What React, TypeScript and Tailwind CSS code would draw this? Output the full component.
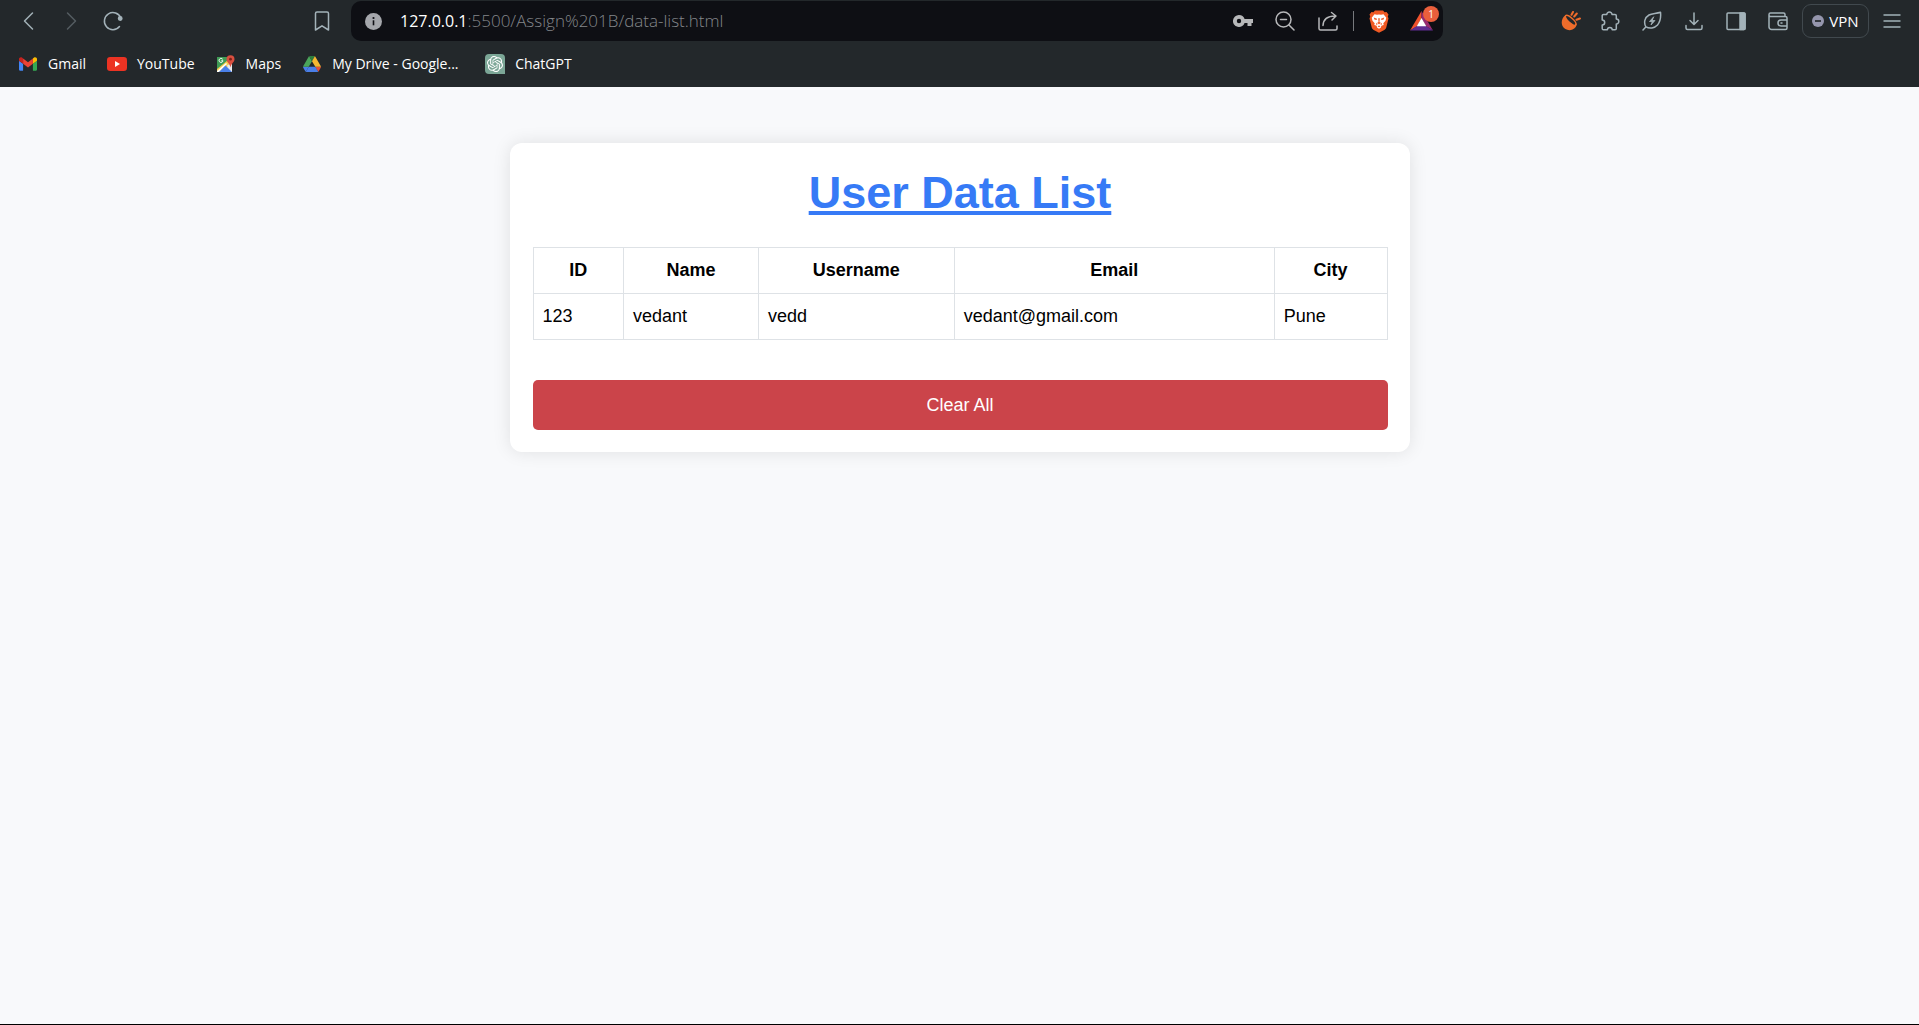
import type { ReactNode } from "react";
import { SiOpenai } from "react-icons/si";

const stroke = {
  fill: "none",
  stroke: "currentColor",
  strokeWidth: 1.5,
  strokeLinecap: "round" as const,
  strokeLinejoin: "round" as const,
};

function Icon({ children, size = 20 }: { children: ReactNode; size?: number }) {
  return (
    <svg width={size} height={size} viewBox="0 0 20 20" aria-hidden="true" {...stroke}>
      {children}
    </svg>
  );
}

function ToolButton({ label, children, className = "w-[42px] text-[#a3b2b9]" }: { label: string; children: ReactNode; className?: string }) {
  return (
    <button type="button" aria-label={label} className={`flex h-10 shrink-0 items-center justify-center ${className}`}>
      {children}
    </button>
  );
}

function Gmail() {
  return (
    <svg width="18" height="14" viewBox="52 42 88 66" aria-hidden="true">
      <path fill="#4285f4" d="M58 108h14V74L52 59v43c0 3.32 2.69 6 6 6" />
      <path fill="#34a853" d="M120 108h14c3.32 0 6-2.69 6-6V59l-20 15" />
      <path fill="#fbbc04" d="M120 48v26l20-15v-8c0-7.42-8.47-11.65-14.4-7.2" />
      <path fill="#ea4335" d="M72 74V48l24 18 24-18v26L96 92" />
      <path fill="#c5221f" d="M52 51v8l20 15V48l-5.6-4.2c-5.94-4.45-14.4-.22-14.4 7.2" />
    </svg>
  );
}

function YouTube() {
  return (
    <svg width="20" height="14" viewBox="0 0 20 14" aria-hidden="true">
      <rect width="20" height="14" rx="3.2" fill="#ec3323" />
      <path d="M8 4v6l5-3z" fill="#fff" />
    </svg>
  );
}

function Maps() {
  return (
    <svg width="20" height="20" viewBox="0 0 20 20" aria-hidden="true">
      <path d="M1 3h15v15H1z" fill="#e8eaed" />
      <path d="M1 3h14v5L1 18z" fill="#3f9b55" />
      <path d="M1 15 12 6l3 3-9 9H1z" fill="#f7cb4d" />
      <path d="m1 17 9-8 1 1-8 8H1z" fill="#fff" />
      <path d="M3 18 9.500 11.500 16 18z" fill="#4a80e8" />
      <path d="M11 11.500 16 9v8.500z" fill="#e8eaed" />
      <path d="M6.700 5.300a2 2 0 1 0 .3 1.500H5.300" fill="none" stroke="#fff" strokeWidth="1" />
      <path d="M14.500 1.200a4 4 0 0 1 4 4c0 3-3.200 3.700-4 8.300-.8-4.600-4-5.300-4-8.300a4 4 0 0 1 4-4z" fill="#d94f3f" />
      <circle cx="14.500" cy="5.200" r="1.400" fill="#7c2018" />
    </svg>
  );
}

function Drive() {
  return (
    <svg width="18" height="16" viewBox="0 0 87.3 78" aria-hidden="true">
      <path fill="#4a7fe8" d="m6.6 66.85 3.85 6.65c.8 1.4 1.95 2.5 3.3 3.3l13.75-23.8h-27.5c0 1.55.4 3.1 1.2 4.5z" />
      <path fill="#4aa45a" d="m43.65 25-13.75-23.8c-1.35.8-2.5 1.9-3.3 3.3l-25.4 44a9.06 9.06 0 0 0 -1.2 4.5h27.5z" />
      <path fill="#e2503a" d="m73.55 76.8c1.35-.8 2.5-1.9 3.3-3.3l1.6-2.75 7.65-13.25c.8-1.4 1.2-2.95 1.2-4.5h-27.502l5.852 11.5z" />
      <path fill="#2d7d3c" d="m43.65 25 13.75-23.8c-1.35-.8-2.9-1.2-4.5-1.2h-18.5c-1.6 0-3.15.45-4.5 1.2z" />
      <path fill="#4a7fe8" d="m59.8 53h-32.3l-13.75 23.8c1.35.8 2.9 1.2 4.5 1.2h50.8c1.6 0 3.15-.45 4.5-1.2z" />
      <path fill="#f5b731" d="m73.4 26.5-12.7-22c-.8-1.4-1.95-2.5-3.3-3.3l-13.75 23.8 16.15 28h27.45c0-1.55-.4-3.1-1.2-4.5z" />
    </svg>
  );
}

function ChatGpt() {
  return (
    <span className="flex size-5 items-center justify-center rounded-t-sm rounded-bl-sm bg-[#7ba696] text-white">
      <SiOpenai size={16} />
    </span>
  );
}

function BraveLion() {
  return (
    <svg width="20" height="23" viewBox="0 0 20 23" aria-hidden="true">
      <path d="M6 .5h8l1.600 1.700 1.900-.2 2 2.500-.7 2 .7 2-2.300 9.200c-.3 1-1 1.800-1.900 2.400L10 22.700l-5.300-2.600c-.9-.6-1.600-1.400-1.900-2.400L.5 8.500l.7-2-.7-2 2-2.500 1.900.2z" fill="#f15a24" />
      <path d="M5.500 4.300 8 4.800 10 4.400l2 .4 2.500-.5 2.800 3.500-.8 3-2.200 2.400.4 1.800-2.400.8-.3 1.700L10 18.700l-2-1.200-.3-1.700-2.400-.8.400-1.800-2.200-2.400-.8-3z" fill="#fff" />
      <path d="m4.800 7.500 3.200 1.200-.4 1.300-2.200-.6zM15.200 7.500 12 8.700l.4 1.300 2.200-.6zM9.200 8.300h1.600l-.3 3.700 1.500 1-2 1.300-2-1.300 1.500-1zM7 12.800l1.700 1.600-1.500.4zM13 12.800l-1.700 1.600 1.500.4zM8.600 16.300l1.400-.8 1.400.8-1.400 1z" fill="#f15a24" />
    </svg>
  );
}

function Rewards() {
  return (
    <span className="relative flex h-10 w-full items-center justify-center">
      <svg width="23" height="20" viewBox="0 0 23 20" aria-hidden="true">
        <path d="M11.500 0 0 19.500l7-4.300 4.500-8z" fill="#f0522d" />
        <path d="M11.500 0 23 19.500l-7-4.300-4.500-8z" fill="#962b70" />
        <path d="M0 19.500h23l-7-4.500H7z" fill="#5f2d91" />
        <path d="M11.500 7 16.300 15.300H6.700z" fill="#fff" />
      </svg>
      <span className="absolute right-1 top-[5px] flex size-4 items-center justify-center rounded-full bg-[#ea5f3c] text-[10px] leading-none text-white">
        1
      </span>
    </span>
  );
}

const bookmarks = [
  { name: "Gmail", icon: <Gmail />, labelWidth: "" },
  { name: "YouTube", icon: <YouTube />, labelWidth: "" },
  { name: "Maps", icon: <Maps />, labelWidth: "" },
  { name: "My Drive - Google...", icon: <Drive />, labelWidth: "min-w-[132px]" },
  { name: "ChatGPT", icon: <ChatGpt />, labelWidth: "" },
];

function AddressBar() {
  return (
    <div className="flex h-10 min-w-0 flex-1 items-center rounded-[10px] bg-[#0e0f14] text-[#b7b8ba]">
      <button type="button" aria-label="Site information" className="ml-[14px] shrink-0">
        <svg width="17" height="17" viewBox="0 0 17 17" aria-hidden="true">
          <circle cx="8.500" cy="8.500" r="8.500" fill="#a5a7ac" />
          <circle cx="8.500" cy="5" r="1.100" fill="#0e0f14" />
          <path d="M7.700 7.300h1.600v5H7.700z" fill="#0e0f14" />
        </svg>
      </button>
      <label htmlFor="address" className="ml-[18px] shrink-0 text-base text-white">
        127.0.0.1
      </label>
      <input
        id="address"
        type="text"
        defaultValue=":5500/Assign%201B/data-list.html"
        className="min-w-0 flex-1 bg-transparent text-[17px] font-light text-[#83868a] outline-none"
      />
      <ToolButton label="Saved passwords" className="w-[43px]">
        <svg width="20" height="12" viewBox="0 0 20 12" aria-hidden="true">
          <path fillRule="evenodd" fill="currentColor" d="M6 0a6 6 0 0 1 5.600 4H20v4h-1.500v3h-4V8h-2.900A6 6 0 1 1 6 0zm0 3.800a2.200 2.200 0 1 0 0 4.400 2.200 2.200 0 0 0 0-4.400z" />
        </svg>
      </ToolButton>
      <ToolButton label="Zoom" className="w-[42px]">
        <Icon>
          <circle cx="8.500" cy="8.500" r="7.500" />
          <path d="M14 14l5 5M5.500 8.500h6" />
        </Icon>
      </ToolButton>
      <ToolButton label="Share" className="w-[43px]">
        <Icon>
          <path d="M1 7v10.500A1.500 1.500 0 0 0 2.500 19h15a1.500 1.500 0 0 0 1.500-1.500V15" />
          <path d="M5 14.500c.3-5.500 4-9.500 12-9.500M13.500 1.500 18 5l-4 4" />
        </Icon>
      </ToolButton>
      <span className="mx-1 h-5 w-px shrink-0 bg-[#77797d]" />
      <ToolButton label="Brave Shields" className="w-[42px]">
        <BraveLion />
      </ToolButton>
      <ToolButton label="Brave Rewards" className="w-[43px]">
        <Rewards />
      </ToolButton>
    </div>
  );
}

function Browser() {
  return (
    <header className="bg-[#23282b] pt-px font-['Open_Sans',sans-serif]">
      <div className="flex items-center">
        <nav aria-label="Navigation" className="flex w-[351px] shrink-0 items-center px-2">
          <ToolButton label="Back">
            <Icon>
              <path d="M13.500 2 5.500 10l8 8" />
            </Icon>
          </ToolButton>
          <ToolButton label="Forward" className="w-[42px] text-[#555d62]">
            <Icon>
              <path d="M6.500 2l8 8-8 8" />
            </Icon>
          </ToolButton>
          <ToolButton label="Reload">
            <Icon>
              <path d="M16.500 15.500A8.500 8.500 0 1 1 17.800 7" />
              <circle cx="17.200" cy="7.500" r="1.700" fill="currentColor" />
            </Icon>
          </ToolButton>
          <ToolButton label="Bookmark this page" className="ml-auto w-[42px] text-[#a3b2b9]">
            <Icon>
              <path d="M5 1h10a1.500 1.500 0 0 1 1.500 1.500V19L10 14.800 3.500 19V2.500A1.500 1.500 0 0 1 5 1z" />
            </Icon>
          </ToolButton>
        </nav>
        <AddressBar />
        <div className="flex w-[476px] shrink-0 items-center justify-end pr-[6px]">
          <ToolButton label="Extension" className="w-9 text-[#ee6c2b]">
            <svg width="20" height="20" viewBox="0 0 20 20" aria-hidden="true">
              <path d="M4.200 4.500C1 6.500-.2 11.500 1.500 15c1.800 3.800 6.500 5 10 3.500 2.600-1.200 4-3.200 4.300-5.500z" fill="currentColor" />
              <ellipse cx="9.600" cy="9.300" rx="2.400" ry="6.800" transform="rotate(-48 9.600 9.300)" fill="#23282b" stroke="currentColor" strokeWidth="1.500" />
              <path d="M10.500 3.800 12 1M13.200 5.500l2.600-3M15.500 8.800l3.500-1.300" stroke="currentColor" strokeWidth="2" strokeLinecap="round" />
            </svg>
          </ToolButton>
          <ToolButton label="Extensions">
            <Icon>
              <path d="M3.500 3.500h3.300a2.600 2.600 0 1 1 5.200 0h3a1.300 1.300 0 0 1 1.300 1.300V8a2.500 2.500 0 0 1 0 5v4.500a1.300 1.300 0 0 1-1.300 1.300h-2.800a2.400 2.400 0 0 0-4.800 0H3.500a1.300 1.300 0 0 1-1.300-1.300V14a2.500 2.500 0 0 0 0-5V4.800a1.300 1.300 0 0 1 1.300-1.300z" />
            </Icon>
          </ToolButton>
          <ToolButton label="Performance">
            <Icon>
              <path d="M1 19l3-3.200M4 15.800C1.500 12 2.500 6.500 7 4c3-1.700 7-1.300 11.500-2.800C19 6 18.500 10.500 15.500 14c-3 3.300-8 4-11.500 1.800z" />
              <path d="M11.500 6 7.500 10.500h2.800L9 14l4-4.500h-2.500z" fill="currentColor" strokeWidth="0.800" />
            </Icon>
          </ToolButton>
          <ToolButton label="Downloads">
            <Icon>
              <path d="M10 2v11M6 9.500l4 4 4-4M2 14.500V17a1.500 1.500 0 0 0 1.500 1.500h13A1.500 1.500 0 0 0 18 17v-2.500" />
            </Icon>
          </ToolButton>
          <ToolButton label="Sidebar">
            <Icon>
              <rect x="1" y="2" width="18" height="16.500" rx="1" />
              <path d="M14 2h4a1 1 0 0 1 1 1v14.500a1 1 0 0 1-1 1h-4z" fill="currentColor" />
            </Icon>
          </ToolButton>
          <ToolButton label="Wallet">
            <Icon>
              <path d="M17 5.500V3.500A1.500 1.500 0 0 0 15.500 2h-13A1.500 1.500 0 0 0 1 3.500V16a2.500 2.500 0 0 0 2.500 2.500h14A1.500 1.500 0 0 0 19 17V7a1.500 1.500 0 0 0-1.500-1.500h-15A1.500 1.500 0 0 1 1 4M19 9h-6a3 3 0 0 0 0 6h6M13 12h1" />
            </Icon>
          </ToolButton>
          <button
            type="button"
            className="ml-[3px] mr-[2px] flex h-[34px] w-[67px] shrink-0 items-center justify-center gap-[5px] rounded-[9px] border border-[#41494e] text-[15px] text-white"
          >
            <svg width="12" height="12" viewBox="0 0 12 12" aria-hidden="true">
              <circle cx="6" cy="6" r="6" fill="#9596ad" />
              <path d="M3 6h6" stroke="#23282b" strokeWidth="1.700" />
            </svg>
            VPN
          </button>
          <ToolButton label="Menu">
            <Icon>
              <path d="M1.500 4h17M1.500 10h17M1.500 16h17" strokeLinecap="butt" />
            </Icon>
          </ToolButton>
        </div>
      </div>
      <nav aria-label="Bookmarks" className="flex h-[46px] items-center gap-[21px] px-[18px]">
        {bookmarks.map((b) => (
          <a key={b.name} href="#" className="flex items-center gap-[10px] text-sm text-white">
            <span className="flex size-5 items-center justify-center">{b.icon}</span>
            <span className={b.labelWidth}>{b.name}</span>
          </a>
        ))}
      </nav>
    </header>
  );
}

const columns = ["ID", "Name", "Username", "Email", "City"];
const users = [["123", "vedant", "vedd", "vedant@gmail.com", "Pune"]];

export default function App() {
  return (
    <div className="flex min-h-screen flex-col border-b border-black bg-[#f8f9fb]">
      <Browser />
      <main className="px-4 pb-10 pt-14 font-['Liberation_Sans',Arial,sans-serif] text-[18px] leading-[27px] text-black">
        <section className="mx-auto max-w-[900px] rounded-xl bg-white pb-[22px] pl-[23px] pr-[22px] pt-[23px] shadow-[0_0_18px_rgba(0,0,0,0.1)]">
          <h1 className="mb-[27px] text-center text-[45px] font-bold leading-[54px] text-[#367af6] underline">User Data List</h1>
          <table className="w-full border-collapse">
            <thead>
              <tr>
                {columns.map((c) => (
                  <th key={c} scope="col" className="border border-[#dee2e6] p-[9px] text-center font-bold">
                    {c}
                  </th>
                ))}
              </tr>
            </thead>
            <tbody>
              {users.map((u) => (
                <tr key={u[0]}>
                  {u.map((v) => (
                    <td key={v} className="border border-[#dee2e6] p-[9px]">
                      {v}
                    </td>
                  ))}
                </tr>
              ))}
            </tbody>
          </table>
          <button type="button" className="mt-10 h-[50px] w-full rounded-[5px] bg-[#cb444a] text-white">
            Clear All
          </button>
        </section>
      </main>
    </div>
  );
}
